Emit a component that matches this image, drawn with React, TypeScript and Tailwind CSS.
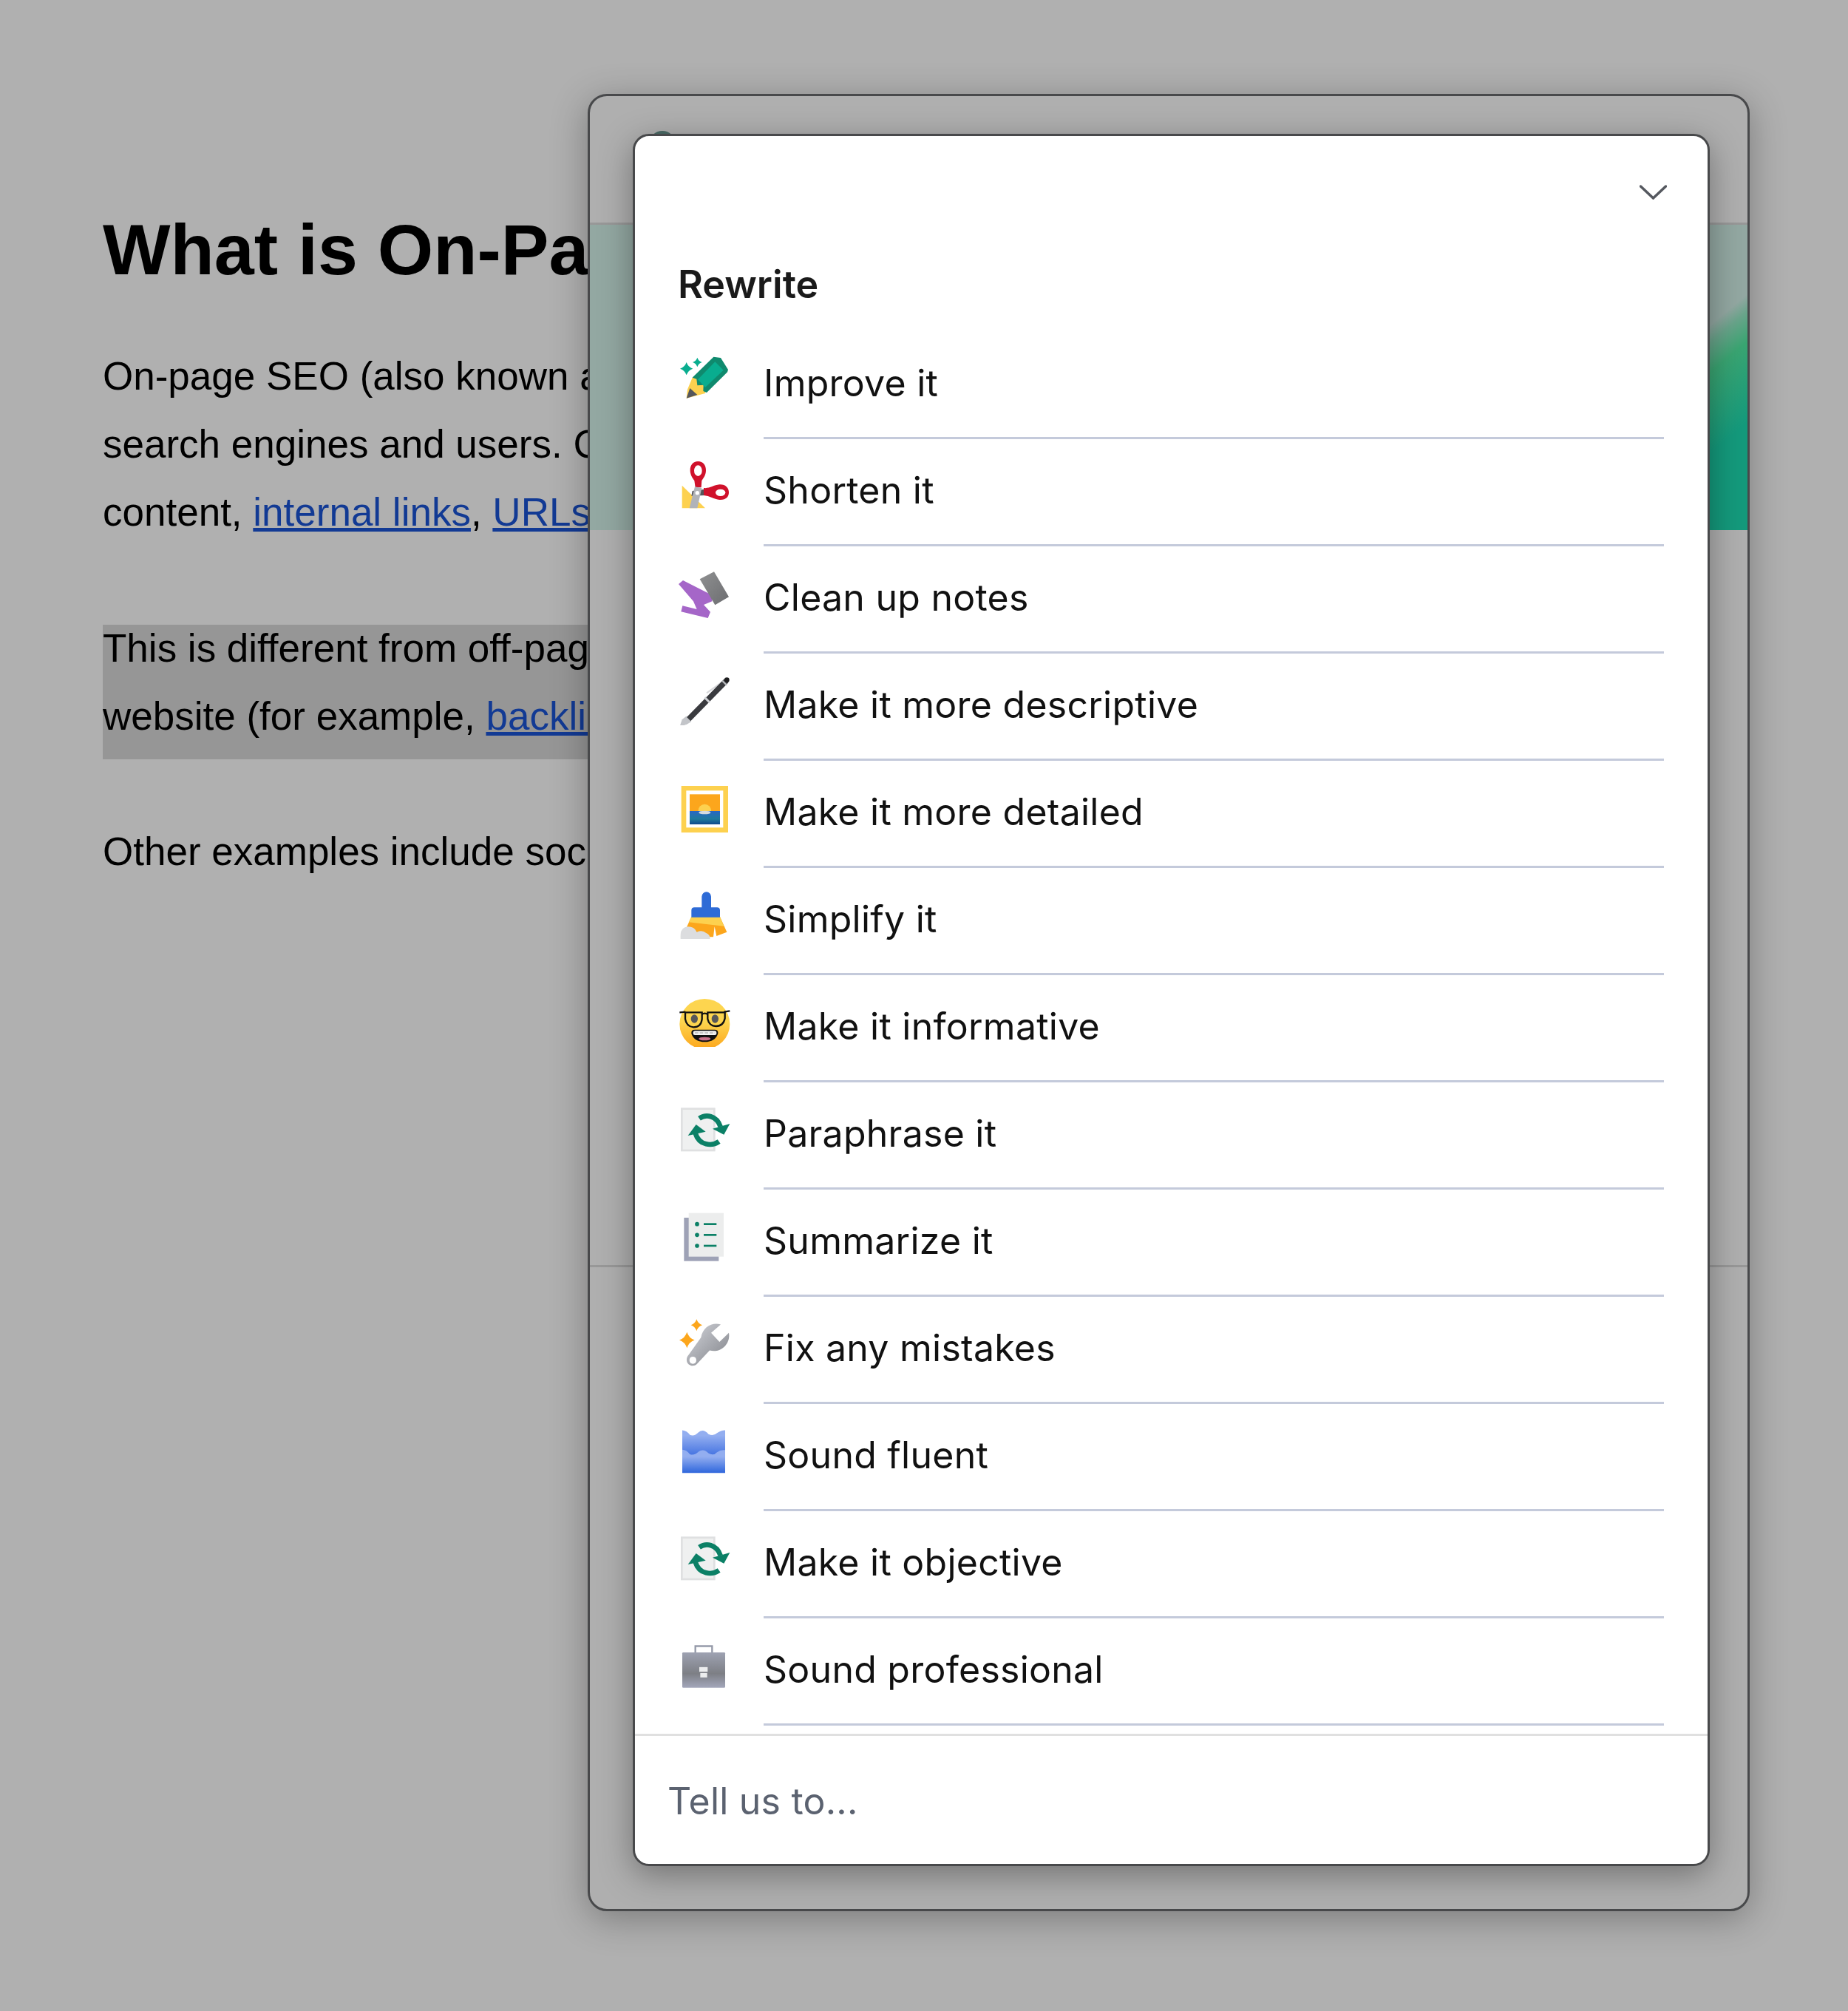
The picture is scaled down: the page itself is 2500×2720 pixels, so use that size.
import type { ReactNode } from 'react';

const inter = 'font-[Inter,sans-serif]';
const teal = '#0b8066';

// All icons are drawn in coordinates measured off a 3x crop of the reference
function Icon({ box, children }: { box: string; children: ReactNode }) {
  return (
    <svg viewBox={box} preserveAspectRatio="none" className="w-[70px] h-[70px] shrink-0 self-start mt-[27px]">
      {children}
    </svg>
  );
}

function Sparkle({ x, y, r, fill }: { x: number; y: number; r: number; fill: string }) {
  const k = r * 0.25;
  return (
    <path
      d={`M${x} ${y - r}Q${x + k} ${y - k} ${x + r} ${y}Q${x + k} ${y + k} ${x} ${y + r}Q${x - k} ${y + k} ${x - r} ${y}Q${x - k} ${y - k} ${x} ${y - r}Z`}
      fill={fill}
    />
  );
}

function Pencil() {
  return (
    <Icon box="114 48 210 210">
      <Sparkle x={146} y={116} r={26} fill="#09ad8f" />
      <Sparkle x={190} y={90} r={19} fill="#09ad8f" />
      <polygon points="170,152 150,200 146,236 222,216 232,170 190,140" fill="#fdd14f" />
      <polygon points="160,195 146,236 190,222" fill="#55565a" />
      <polygon points="170,152 256,68 285,72 315,120 312,130 228,213 214,207 215,182 190,184 187,158" fill="#0f8a6e" />
      <polygon points="192,160 262,88 296,122 222,192" fill="#09ad8f" />
    </Icon>
  );
}

function Scissors() {
  return (
    <Icon box="114 483 210 210">
      <polygon points="128,590 128,682 222,682" fill="#fdd14f" />
      <polygon points="170,612 222,605 220,630 166,632" fill="#55565a" />
      <path d="M193 492C172 492 161 508 161 528C161 548 172 562 178 570L182 598L206 598L208 570C215 560 225 548 225 528C225 508 214 492 193 492Z" fill="#d0112b" />
      <ellipse cx="193" cy="530" rx="16" ry="22" fill="#fff" />
      <path d="M216 600C240 603 255 588 280 586C305 585 318 600 318 618C318 636 305 650 280 648C258 646 240 632 216 630Z" fill="#d0112b" />
      <ellipse cx="284" cy="619" rx="20" ry="14" fill="#fff" />
      <polygon points="180,595 208,600 190,682 158,682" fill="#b1b3b8" />
      <circle cx="190" cy="620" r="8" fill="#fff" />
    </Icon>
  );
}

function CleanUp() {
  return (
    <Icon box="114 918 210 210">
      <defs>
        <linearGradient id="eraser" x1="0" y1="0" x2="1" y2="1">
          <stop offset="0" stopColor="#8f9091" />
          <stop offset="1" stopColor="#6c6d70" />
        </linearGradient>
      </defs>
      <polygon points="114,990 132,975 250,1035 250,1060 216,1074 243,1103 233,1128 124,1102 130,1078 188,1092 174,1060" fill="#a566c8" />
      <polygon points="200,970 258,940 318,1042 262,1075" fill="url(#eraser)" />
    </Icon>
  );
}

function Pen() {
  return (
    <Icon box="114 93 210 210">
      <path d="M228 172L290 128" stroke="#d6d7da" strokeWidth="6" fill="none" />
      <polygon points="118,310 128,280 145,266 166,288 150,298" fill="#c3c5c9" />
      <path d="M155 278L308 122" stroke="#3a3b3f" strokeWidth="22" />
      <path d="M220 190L240 210" stroke="#d0d2d6" strokeWidth="9" />
      <path d="M291 122L309 140" stroke="#b5b7bb" strokeWidth="7" />
      <circle cx="310" cy="119" r="10" fill="#1d1d1f" />
    </Icon>
  );
}

function Picture() {
  return (
    <Icon box="114 528 210 210">
      <defs>
        <linearGradient id="sea" x1="0" y1="0" x2="0" y2="1">
          <stop offset="0" stopColor="#2a67c4" />
          <stop offset="0.6" stopColor="#1f7a9c" />
          <stop offset="1" stopColor="#10488c" />
        </linearGradient>
      </defs>
      <rect x="125" y="549" width="190" height="190" fill="#fdd14f" />
      <rect x="145" y="568" width="150" height="150" fill="#fff" />
      <rect x="159" y="583" width="123" height="68" fill="#fca61c" />
      <circle cx="220" cy="649" r="26" fill="#fdd14f" />
      <rect x="159" y="651" width="123" height="54" fill="url(#sea)" />
      <ellipse cx="220" cy="657" rx="24" ry="7" fill="#d5dbe0" />
    </Icon>
  );
}

function Broom() {
  return (
    <Icon box="54 33 210 210">
      <polygon points="106,150 222,150 250,212 208,228 200,190 195,232 62,232 88,190" fill="#fca61c" />
      <polygon points="106,150 222,150 238,188 95,172" fill="#fdd14f" />
      <path d="M148 68A19 19 0 0 1 186 68V112H210Q222 112 222 124V152H106V124Q106 112 118 112H148Z" fill="#2e6bd6" />
      <path d="M62 240V222Q64 192 92 190Q118 190 128 212Q150 202 166 216Q182 222 182 240Z" fill="#dcdddf" />
    </Icon>
  );
}

function Nerd() {
  return (
    <Icon box="114 108 210 210">
      <defs>
        <linearGradient id="nerd" x1="0" y1="0" x2="0" y2="1">
          <stop offset="0.45" stopColor="#fdd54f" />
          <stop offset="1" stopColor="#fca61c" />
        </linearGradient>
      </defs>
      <circle cx="220" cy="225" r="102" fill="url(#nerd)" />
      <path d="M118 178L142 176M298 176L322 172M208 186Q220 178 232 186" stroke="#111" strokeWidth="7" fill="none" />
      <path d="M141 178H209V205Q205 238 175 238Q146 236 141 205Z" stroke="#111" strokeWidth="7" fill="#fdd54f" />
      <path d="M232 178H302V202Q296 234 266 234Q238 234 232 205Z" stroke="#111" strokeWidth="7" fill="#fdd54f" />
      <ellipse cx="178" cy="204" rx="14" ry="17" fill="#58585a" />
      <ellipse cx="262" cy="204" rx="14" ry="17" fill="#58585a" />
      <path d="M180 248H260Q276 248 274 264Q262 298 220 298Q178 298 166 264Q164 248 180 248Z" fill="#111" />
      <rect x="173" y="253" width="95" height="17" rx="7" fill="#f2f2f2" />
      <path d="M180 261H262" stroke="#9a9a9c" strokeWidth="3" strokeDasharray="14 6" />
      <ellipse cx="220" cy="285" rx="24" ry="7" fill="#c9718c" />
    </Icon>
  );
}

function Sync({ box }: { box: string }) {
  return (
    <Icon box={box}>
      <rect x="123" y="565" width="140" height="177" fill="#dfe0e1" />
      <rect x="131" y="573" width="124" height="161" fill="#eff0f0" />
      <path d="M198 608C225 590 268 595 284 642" stroke={teal} strokeWidth="20" fill="none" />
      <polygon points="252,650 322,630 298,674" fill={teal} />
      <path d="M278 702C250 722 198 720 182 668" stroke={teal} strokeWidth="20" fill="none" />
      <polygon points="152,678 185,633 224,662" fill={teal} />
    </Icon>
  );
}

function Summary() {
  return (
    <Icon box="54 33 210 210">
      <rect x="76" y="66" width="141" height="176" fill="#9ea2b6" />
      <rect x="95" y="47" width="142" height="177" fill="#eceded" />
      {[92, 136, 180].map((y) => (
        <g key={y}>
          <circle cx="129" cy={y} r="8.5" fill={teal} />
          <rect x="156" y={y - 4} width="52" height="8" fill={teal} />
        </g>
      ))}
    </Icon>
  );
}

function Wrench() {
  return (
    <Icon box="114 60 210 200">
      <defs>
        <linearGradient id="wrench" x1="0" y1="0" x2="1" y2="1">
          <stop offset="0" stopColor="#d3d5db" />
          <stop offset="1" stopColor="#7f8187" />
        </linearGradient>
      </defs>
      <Sparkle x={187} y={92} r={23} fill="#fca61c" />
      <Sparkle x={148} y={150} r={31} fill="#fca61c" />
      <path d="M205 140C212 100 250 80 285 90L246 122L280 157L318 122C326 165 285 202 240 190L188 243C172 258 140 245 148 218Q150 212 156 206Z" fill="url(#wrench)" />
      <circle cx="172" cy="228" r="14" fill="#fff" />
    </Icon>
  );
}

function Waves() {
  return (
    <Icon box="114 473 210 200">
      <defs>
        <linearGradient id="waveA" x1="0" y1="0" x2="0" y2="1">
          <stop offset="0.2" stopColor="#93aef0" />
          <stop offset="1" stopColor="#3f6fe0" />
        </linearGradient>
        <linearGradient id="waveB" x1="0" y1="0" x2="0" y2="1">
          <stop offset="0.3" stopColor="#93aef0" />
          <stop offset="1" stopColor="#2f66dc" />
        </linearGradient>
      </defs>
      <path d="M129 497Q150 500 160 515Q178 522 195 505Q215 490 235 512Q255 522 270 508Q285 497 303 497V600H129Z" fill="url(#waveA)" />
      <path d="M129 572Q145 572 160 590Q178 596 195 580Q215 566 235 586Q255 598 270 582Q285 572 303 574V662H129Z" fill="url(#waveB)" />
    </Icon>
  );
}

function Briefcase() {
  return (
    <Icon box="114 1299 210 200">
      <defs>
        <linearGradient id="bag" x1="0" y1="0" x2="0" y2="1">
          <stop offset="0" stopColor="#9ea2b2" />
          <stop offset="0.6" stopColor="#7d7f85" />
          <stop offset="1" stopColor="#a3a7bb" />
        </linearGradient>
      </defs>
      <rect x="182" y="1329" width="68" height="32" fill="none" stroke="#9499a8" strokeWidth="7" />
      <rect x="129" y="1353" width="174" height="137" rx="4" fill="url(#bag)" />
      <rect x="198" y="1410" width="34" height="18" fill="#ecedee" />
      <rect x="202" y="1433" width="28" height="17" fill="#ecedee" />
    </Icon>
  );
}

const rows: { label: string; icon: ReactNode }[] = [
  { label: 'Improve it', icon: <Pencil /> },
  { label: 'Shorten it', icon: <Scissors /> },
  { label: 'Clean up notes', icon: <CleanUp /> },
  { label: 'Make it more descriptive', icon: <Pen /> },
  { label: 'Make it more detailed', icon: <Picture /> },
  { label: 'Simplify it', icon: <Broom /> },
  { label: 'Make it informative', icon: <Nerd /> },
  { label: 'Paraphrase it', icon: <Sync box="114 543 210 210" /> },
  { label: 'Summarize it', icon: <Summary /> },
  { label: 'Fix any mistakes', icon: <Wrench /> },
  { label: 'Sound fluent', icon: <Waves /> },
  { label: 'Make it objective', icon: <Sync box="114 543 210 210" /> },
  { label: 'Sound professional', icon: <Briefcase /> },
];

function Article() {
  const link = 'text-[#123a94] underline';
  return (
    <article className="pt-[283px] pl-[139px] w-[1400px] font-['Liberation_Sans',Arial,sans-serif] text-black whitespace-nowrap">
      <h1 className="text-[97px] leading-[110px] font-bold mb-[70px]">What is On-Page SEO?</h1>
      <p className="text-[53px] leading-[92px]">On-page SEO (also known as</p>
      <p className="text-[53px] leading-[92px]">search engines and users. Common</p>
      <p className="text-[53px] leading-[91px] mb-[107px]">
        content, <span className={link}>internal links</span>, <span className={link}>URLs</span>
      </p>
      {/* the highlight starts below the first line box, so the text sits high in it */}
      <div className="flex flex-col h-[182px] bg-[#969696] text-[53px] leading-[92px] mb-[79px]">
        <p className="-mt-[14px]">This is different from off-page SEO</p>
        <p>
          website (for example, <span className={link}>backlinks</span>)
        </p>
      </div>
      <p className="text-[53px] leading-[92px]">Other examples include social</p>
    </article>
  );
}

function RewriteMenu() {
  return (
    <div className={`absolute left-[58px] top-[51px] w-[1457px] h-[2343px] flex flex-col overflow-hidden rounded-[22px] border-[3px] border-[#48494b] bg-white shadow-[0_12px_45px_rgba(0,0,0,0.35)] ${inter}`}>
      <svg viewBox="0 0 37 20" className="w-[37px] h-[20px] self-end mr-[55px] mt-[66px]" fill="none" stroke="#55585f" strokeWidth="3.5" strokeLinecap="round">
        <path d="M1.5 2L18.5 18L35.5 2" />
      </svg>
      <h2 className="ml-[58px] mt-[85px] mb-[34px] text-[52px] leading-[60px] font-semibold text-[#1a1a1a]">Rewrite</h2>
      <ul className="pl-[59px] pr-[59px]">
        {rows.map((row) => (
          <li key={row.label} className="flex h-[145px]">
            <div className="w-[115px] shrink-0">{row.icon}</div>
            <div className="flex-1 border-b-[3px] border-[#c4cadb] pb-[4px] flex items-center text-[50px] leading-none text-[#111] tracking-[0.25px]">
              {row.label}
            </div>
          </li>
        ))}
      </ul>
      <div className="mt-[11px] flex-1 border-t-[3px] border-[#e0e0e0] pl-[44px] pt-[58px] text-[50px] leading-[60px] text-[#5b6270] tracking-[0.2px]">
        Tell us to...
      </div>
    </div>
  );
}

function ModalFrame() {
  return (
    <div className="absolute left-[795px] top-[127px] w-[1572px] h-[2458px] rounded-[26px] border-[3px] border-[#48494b] bg-[#afafaf] shadow-[0_10px_50px_rgba(0,0,0,0.3)] overflow-visible">
      <div className="h-[171px] pl-[80px] pt-[47px] overflow-hidden">
        <div className="w-[36px] h-[36px] rounded-full bg-[#4b6b66]" />
      </div>
      <div className="h-[416px] border-t-[3px] border-[#989898] bg-[#93a8a2] flex justify-end">
        <div className="w-[52px] bg-[linear-gradient(140deg,#93a8a2_30%,#6ba58c_35%,#3aa572_44%,#149a7c_68%)]" />
      </div>
      <div className="h-[997px] border-b-[3px] border-[#989898]" />
      <RewriteMenu />
    </div>
  );
}

export default function App() {
  return (
    <div className="relative w-[2500px] h-[2720px] overflow-hidden bg-[#b0b0b0]">
      <Article />
      <ModalFrame />
    </div>
  );
}
